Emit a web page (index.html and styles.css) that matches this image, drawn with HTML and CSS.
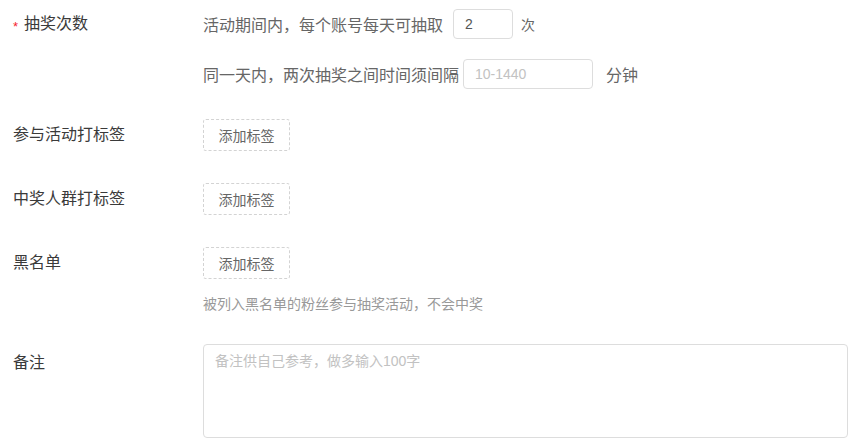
FILE: index.html
```html
<html lang="zh-CN">
<head>
    <meta charset="UTF-8">
    <meta name="viewport" content="width=device-width, initial-scale=1.0">
    <title>抽奖设置</title>
    <link rel="stylesheet" href="styles.css">
</head>
<body>
    <div class="form">
        <div class="row row-count">
            <div class="row-label"><span class="star">*</span>抽奖次数</div>
            <div class="row-body">
                <div class="line">
                    <span class="txt">活动期间内，每个账号每天可抽取</span>
                    <input class="num-input" type="text" value="2">
                    <span class="unit">次</span>
                </div>
                <div class="line line-2">
                    <span class="txt">同一天内，两次抽奖之间时间须间隔</span>
                    <input class="gap-input" type="text" placeholder="10-1440">
                    <span class="unit unit-wide">分钟</span>
                </div>
            </div>
        </div>

        <div class="row row-tag">
            <div class="row-label">参与活动打标签</div>
            <div class="row-body">
                <button class="tag-btn" type="button">添加标签</button>
            </div>
        </div>

        <div class="row row-tag">
            <div class="row-label">中奖人群打标签</div>
            <div class="row-body">
                <button class="tag-btn" type="button">添加标签</button>
            </div>
        </div>

        <div class="row row-black">
            <div class="row-label">黑名单</div>
            <div class="row-body">
                <button class="tag-btn" type="button">添加标签</button>
                <div class="hint">被列入黑名单的粉丝参与抽奖活动，不会中奖</div>
            </div>
        </div>

        <div class="row row-note">
            <div class="row-label">备注</div>
            <div class="row-body">
                <textarea class="note" placeholder="备注供自己参考，做多输入100字"></textarea>
            </div>
        </div>
    </div>
</body>
</html>
```

FILE: styles.css
```css
body{
    margin: 0;
    padding: 0;
    background-color: #fff;
    font-family: "Liberation Sans", "Noto Sans CJK SC", sans-serif;
    color: #333;
}

.form{
    padding-top: 9px;
}

.row{
    display: flex;
    align-items: flex-start;
}
.row-label{
    width: 190px;
    padding-left: 13px;
    font-size: 16px;
    color: #3a3a3a;
    line-height: 32px;
    flex-shrink: 0;
}
.star{
    display: inline-block;
    width: 11px;
    color: #f5222d;
    font-size: 13px;
    vertical-align: -2px;
    line-height: 1;
}
.row-body{
    flex: 1;
}

/* 抽奖次数 */
.row-count{
    margin-bottom: 30px;
}
.row-count .row-label{
    line-height: 30px;
}
.line{
    display: flex;
    align-items: center;
    height: 30px;
}
.line-2{
    margin-top: 20px;
}
.txt{
    font-size: 16px;
    color: #666;
}
input{
    height: 30px;
    box-sizing: border-box;
    border: 1px solid #ddd;
    border-radius: 4px;
    font-family: "Liberation Sans", "Noto Sans CJK SC", sans-serif;
    font-size: 14px;
    color: #555;
    outline: none;
}
input::placeholder{
    color: #c2c2c2;
}
.num-input{
    width: 60px;
    margin-left: 10px;
    padding: 0 11px;
}
.gap-input{
    width: 130px;
    margin-left: 4px;
    padding: 0 11px;
}
.unit{
    font-size: 14px;
    color: #666;
    margin-left: 8px;
}
.unit-wide{
    font-size: 16px;
    margin-left: 13px;
}

/* 标签 */
.row-tag{
    margin-bottom: 32px;
}
.tag-btn{
    width: 87px;
    height: 32px;
    padding: 0;
    background: #fff;
    border: 1px dashed #d3d3d3;
    border-radius: 3px;
    font-family: "Liberation Sans", "Noto Sans CJK SC", sans-serif;
    font-size: 14px;
    color: #666;
    cursor: pointer;
}
.hint{
    margin-top: 15px;
    font-size: 14px;
    line-height: 20px;
    color: #999;
}
.row-black{
    margin-bottom: 30px;
}

/* 备注 */
.row-note .row-label{
    padding-top: 8px;
    line-height: 22px;
}
.note{
    display: block;
    width: 645px;
    height: 94px;
    box-sizing: border-box;
    padding: 6px 11px;
    border: 1px solid #ddd;
    border-radius: 4px;
    resize: none;
    font-family: "Liberation Sans", "Noto Sans CJK SC", sans-serif;
    font-size: 14px;
    line-height: 20px;
    color: #555;
    outline: none;
}
.note::placeholder{
    color: #c2c2c2;
}
```
